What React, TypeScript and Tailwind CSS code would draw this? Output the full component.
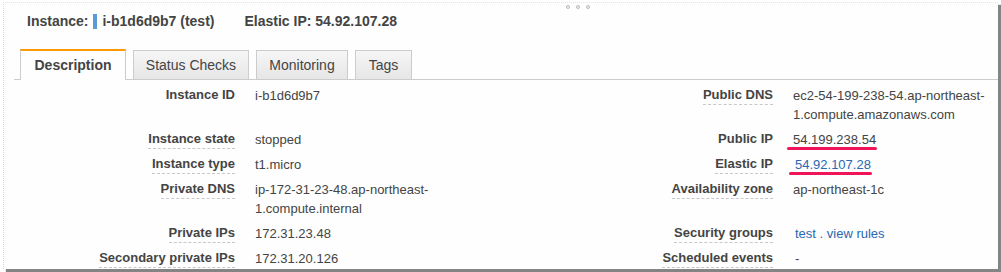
const tabs = [
  { label: 'Description', width: 'w-[106px]', active: true },
  { label: 'Status Checks', width: 'w-[116px]', active: false },
  { label: 'Monitoring', width: 'w-[92px]', active: false },
  { label: 'Tags', width: 'w-[57px]', active: false },
];

function Label({ text, dashed = true }: { text: string; dashed?: boolean }) {
  return (
    <div className="pr-5 text-right">
      <span
        className={
          'inline-block align-top font-bold leading-[18px] ' +
          (dashed ? 'border-b border-dashed border-[#c8c8c8]' : 'border-b border-transparent')
        }
      >
        {text}
      </span>
    </div>
  );
}

function Marked({ children, link = false }: { children: string; link?: boolean }) {
  return (
    <span className={'relative inline-block align-top leading-[19px] ' + (link ? 'ml-[2px] text-[#2a67b4]' : '')}>
      {children}
      <span className="absolute -left-[6px] -right-[1px] bottom-[-1px] h-[3px] rounded-full bg-[#f0145a]" />
    </span>
  );
}

export default function App() {
  return (
    <div className="w-[1001px] h-[272px] bg-white text-[#444] font-['Liberation_Sans',Arial,sans-serif]">
      <div className="relative ml-[3px] mt-[2px] w-[995px] h-[267px] bg-[#fdfefd] border-l border-[#d6d6d6] border-t border-t-[#eadfe5] border-dotted shadow-[3px_3px_1px_rgba(110,110,110,0.85)]">
        <div className="absolute left-[562px] top-[2px] flex gap-[6px]">
          <span className="w-[4px] h-[4px] rounded-full border border-[#bbb] bg-[#eee]" />
          <span className="w-[4px] h-[4px] rounded-full border border-[#bbb] bg-[#eee]" />
          <span className="w-[4px] h-[4px] rounded-full border border-[#bbb] bg-[#eee]" />
        </div>

        <div className="h-[36px] flex items-center pl-[23px] text-[14px] font-bold">
          <span>Instance:</span>
          <span className="ml-[5px] w-[4px] h-[15px] bg-[#5a9ad6]" />
          <span className="ml-[5px]">i-b1d6d9b7 (test)</span>
          <span className="ml-[30px]">Elastic IP: 54.92.107.28</span>
        </div>

        <div className="mt-[9px] ml-[10px] h-[32px] flex items-end gap-[7px] border-b border-[#cccccc] pl-[6px]">
          {tabs.map((tab) =>
            tab.active ? (
              <div
                key={tab.label}
                className={tab.width + ' h-[31px] -mb-px flex items-center justify-center bg-[#fdfefd] border-x border-[#cccccc] border-t-2 border-t-[#f90] text-[14px] font-bold'}
              >
                {tab.label}
              </div>
            ) : (
              <div
                key={tab.label}
                className={tab.width + ' h-[29px] flex items-center justify-center pt-[1px] bg-gradient-to-b from-[#f6f6f6] to-[#e6e6e6] border-x border-t border-[#cccccc] text-[14px]'}
              >
                {tab.label}
              </div>
            )
          )}
        </div>

        <div className="mt-[3px] grid grid-cols-[251px_200px_338px_1fr] text-[13px] leading-[19px] [&>div]:py-[3px]">
          <Label text="Instance ID" dashed={false} />
          <div>i-b1d6d9b7</div>
          <Label text="Public DNS" />
          <div className="pr-1">ec2-54-199-238-54.ap-northeast-1.compute.amazonaws.com</div>

          <Label text="Instance state" />
          <div>stopped</div>
          <Label text="Public IP" dashed={false} />
          <div>
            <Marked>54.199.238.54</Marked>
          </div>

          <Label text="Instance type" />
          <div>t1.micro</div>
          <Label text="Elastic IP" />
          <div>
            <Marked link>54.92.107.28</Marked>
          </div>

          <Label text="Private DNS" />
          <div>ip-172-31-23-48.ap-northeast-1.compute.internal</div>
          <Label text="Availability zone" />
          <div>ap-northeast-1c</div>

          <Label text="Private IPs" />
          <div>172.31.23.48</div>
          <Label text="Security groups" />
          <div className="pl-[2px] text-[#2a67b4]">test . view rules</div>

          <Label text="Secondary private IPs" />
          <div>172.31.20.126</div>
          <Label text="Scheduled events" />
          <div className="pl-[2px]">-</div>
        </div>
      </div>
    </div>
  );
}
